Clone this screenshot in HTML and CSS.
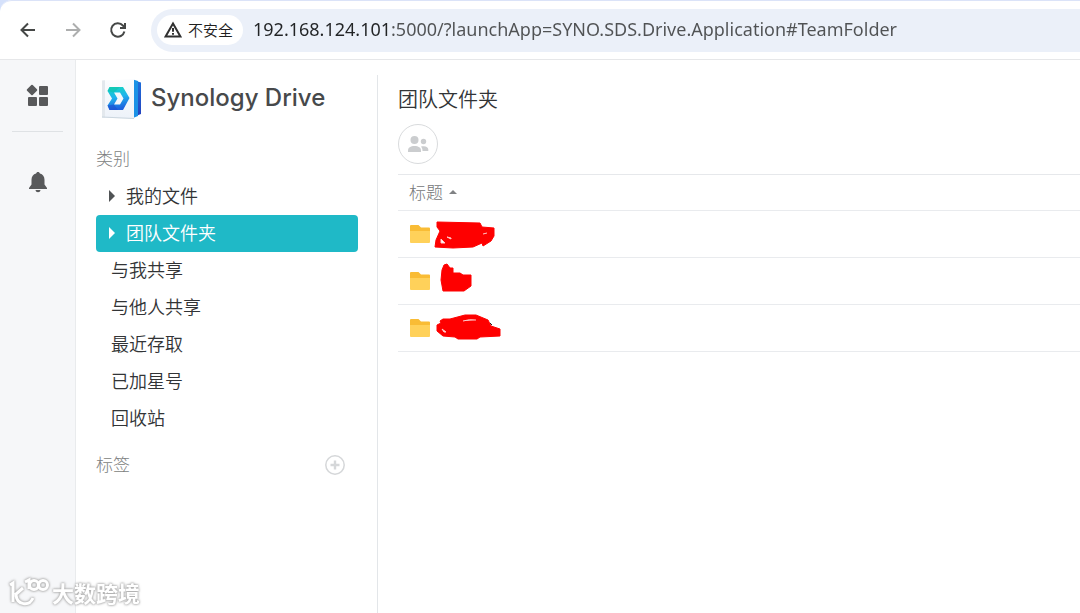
FILE: index.html
```html
<!DOCTYPE html>
<html lang="zh-CN">
<head>
  <meta charset="UTF-8">
  <title>Synology Drive</title>
  <meta name="viewport" content="width=device-width, initial-scale=1.0">
  <link rel="stylesheet" href="styles.css">
</head>
<body>
  <header class="browser-bar">
    <button class="nav-btn" type="button" aria-label="后退">
      <svg width="20" height="20" viewBox="0 0 20 20"><path d="M17 10H4M10 3.5L3.5 10L10 16.5"/></svg>
    </button>
    <button class="nav-btn" type="button" aria-label="前进" disabled>
      <svg width="20" height="20" viewBox="0 0 20 20"><path d="M3 10H16M10 3.5L16.5 10L10 16.5"/></svg>
    </button>
    <button class="nav-btn" type="button" aria-label="刷新">
      <svg width="20" height="20" viewBox="0 0 20 20"><path d="M16.4 11.5A6.7 6.7 0 1 1 14.9 5.5L16.5 7.2M17 3V8H12"/></svg>
    </button>
    <div class="address">
      <button class="security" type="button">
        <svg width="18" height="18" viewBox="0 0 18 18"><path d="M9 2.5L16.4 15.4H1.6Z"/><path d="M9 7V10.8M9 12V13.8"/></svg>
        不安全
      </button>
      <input class="url" type="text" aria-label="地址" value="192.168.124.101:5000/?launchApp=SYNO.SDS.Drive.Application#TeamFolder">
    </div>
  </header>

  <div class="app">
    <nav class="rail">
      <button type="button" aria-label="应用">
        <svg width="24" height="24" viewBox="0 0 24 24"><rect x="2" y="2" width="8" height="8" rx="1" transform="rotate(45 6 6)"/><rect x="13" y="2" width="9" height="9" rx="1"/><rect x="2" y="13" width="9" height="9" rx="1"/><rect x="13" y="13" width="9" height="9" rx="1"/></svg>
      </button>
      <hr>
      <button type="button" aria-label="通知">
        <svg width="24" height="24" viewBox="0 0 24 24"><path d="M12 1C13 1 13.7 1.600 13.9 2.5C16.8 3.3 18.5 5.5 18.5 8.7V13.5L21 17V18H3V17L5.500 13.500V8.700C5.500 5.500 7.200 3.300 10.100 2.500C10.300 1.600 11 1 12 1Z"/><path d="M9.500 19H14.500C14.300 20.500 13.300 21.200 12 21.200S9.700 20.500 9.500 19Z"/></svg>
      </button>
    </nav>

    <aside class="sidebar">
      <div class="brand">
        <svg width="42" height="42" viewBox="0 0 42 42">
          <defs>
            <linearGradient id="pages" x1="0" y1="0" x2="0" y2="1"><stop offset="0" stop-color="#1d6fdc"/><stop offset="1" stop-color="#2441bd"/></linearGradient>
            <linearGradient id="mark" x1="0" y1="0" x2="0.200" y2="1"><stop offset="0" stop-color="#13d9bd"/><stop offset="0.500" stop-color="#20b4ed"/><stop offset="1" stop-color="#1c62df"/></linearGradient>
            <linearGradient id="cover" x1="0" y1="0" x2="0" y2="1"><stop offset="0" stop-color="#fbfcfe"/><stop offset="1" stop-color="#edf2f9"/></linearGradient>
          </defs>
          <path d="M36 3L41 4.500V36L36 38Z" fill="url(#pages)"/>
          <path d="M33 1.500L38 3V38L33 40Z" fill="#1a91e6"/>
          <path d="M2 2.500L34 1V41L2 39.500Z" fill="url(#cover)"/>
          <path d="M2 2.500L5 2.300V39.600L2 39.500Z" fill="#e3e8ed"/>
          <path d="M2 39L34 40.500" stroke="#cbd6df" fill="none"/>
          <path d="M9.500 9H23L29.500 20L23 32H9.500L7.500 27.500L12 20.500L7.500 13ZM14 14.500L17.500 20.500L14 26.500H20L23.500 20.500L20 14.500Z" fill="url(#mark)" fill-rule="evenodd"/>
          <path d="M7.500 27.500L14 26.500L18 32H9.500Z" fill="#1b4fd0" opacity="0.600"/>
          <path d="M9.500 9H20L14 14.500L7.500 13Z" fill="#0cb9a0" opacity="0.400"/>
        </svg>
        <span>Synology Drive</span>
      </div>
      <h2>类别</h2>
      <ul class="menu">
        <li><a class="parent" href="#MyDrive">我的文件</a></li>
        <li><a class="parent active" href="#TeamFolder">团队文件夹</a></li>
        <li><a href="#SharedWithMe">与我共享</a></li>
        <li><a href="#SharedWithOthers">与他人共享</a></li>
        <li><a href="#Recent">最近存取</a></li>
        <li><a href="#Starred">已加星号</a></li>
        <li><a href="#RecycleBin">回收站</a></li>
      </ul>
      <div class="labels">
        <h2>标签</h2>
        <button type="button" aria-label="新增标签">
          <svg width="20" height="20" viewBox="0 0 20 20"><circle cx="10" cy="10" r="9.200"/><path d="M10 5.500V14.500M5.500 10H14.500" stroke-width="2.400"/></svg>
        </button>
      </div>
    </aside>

    <main class="content">
      <h1>团队文件夹</h1>
      <button class="share" type="button" aria-label="共享">
        <svg width="22" height="18" viewBox="0 0 22 18"><circle cx="7.500" cy="5" r="4"/><path d="M1 17V15.500C1 12.500 3.500 11 7.500 11S14 12.500 14 15.500V17Z"/><circle cx="16.500" cy="6.500" r="2.700"/><path d="M14 11.500C18.500 10.500 21.300 12 21.300 14.500V16H15.500C15.500 14 15 12.700 14 11.500Z"/></svg>
      </button>
      <table class="files">
        <thead>
          <tr><th scope="col">标题 <span class="sort"></span></th></tr>
        </thead>
        <tbody>
          <tr><td><div class="file">
            <svg class="folder" width="22" height="20" viewBox="0 0 22 20"><path d="M1 2Q1 1 2 1H9.500L12 3.500H20Q21 3.500 21 4.500V10H1Z" fill="#f9bc35"/><path d="M1 7H21V18Q21 19 20 19H2Q1 19 1 18Z" fill="#ffd15a"/></svg>
            <svg class="redact" width="70" height="46" viewBox="0 0 70 46"><path d="M3 11L46 12L48 16L60 17V25L57 30L49 35L48 32L39 36L19 37L1 36L2 29L6 20L3 16Z"/><path class="gap" d="M7 28L11 32H7ZM13 26L17 27V28ZM49 23L53 22"/></svg>
          </div></td></tr>
          <tr><td><div class="file">
            <svg class="folder" width="22" height="20" viewBox="0 0 22 20"><path d="M1 2Q1 1 2 1H9.500L12 3.500H20Q21 3.500 21 4.500V10H1Z" fill="#f9bc35"/><path d="M1 7H21V18Q21 19 20 19H2Q1 19 1 18Z" fill="#ffd15a"/></svg>
            <svg class="redact" width="70" height="46" viewBox="0 0 70 46"><path d="M8 12L10 7L13 6L16 10H19V15L26 15L29 17H37V28L30 33H9L7 22Z"/></svg>
          </div></td></tr>
          <tr><td><div class="file">
            <svg class="folder" width="22" height="20" viewBox="0 0 22 20"><path d="M1 2Q1 1 2 1H9.500L12 3.500H20Q21 3.500 21 4.500V10H1Z" fill="#f9bc35"/><path d="M1 7H21V18Q21 19 20 19H2Q1 19 1 18Z" fill="#ffd15a"/></svg>
            <svg class="redact" width="70" height="46" viewBox="0 0 70 46"><path d="M6 16L9 14H16L31 10H42L54 15L57 21L66 24V31L46 32L43 34H24L21 32L9 31L3 26V20L7 18Z"/><path class="gap" d="M8 24L12 27H10ZM29 16Q35 14 42 15"/><path class="stray" d="M56 18L58 20"/></svg>
          </div></td></tr>
        </tbody>
      </table>
    </main>
  </div>

  <div class="watermark">
    <svg width="40" height="32" viewBox="0 0 40 32"><path d="M1 8L4 6V25M14 11L6 18M7 18C8 28 20 30 24 21"/><path d="M16 5L20 3V12"/><circle cx="25" cy="8" r="4.500"/><circle cx="34" cy="8" r="4.500"/></svg>
    <span>大数跨境</span>
  </div>
</body>
</html>
```

FILE: styles.css
```css
* { box-sizing: border-box; }
body { margin: 0; min-height: 100vh; display: flex; flex-direction: column; background: #fff; color: #323436; font-family: "Noto Sans", "Noto Sans CJK SC", sans-serif; font-size: 18px; font-weight: 300; }
button { padding: 0; border: 0; background: none; font: inherit; color: inherit; cursor: pointer; }
h1, h2 { margin: 0; font-weight: inherit; }
svg { display: block; flex: none; }

/* browser toolbar */
.browser-bar { display: flex; align-items: center; height: 60px; padding-left: 18px; gap: 25px; border-top: 1px solid #dbe3f8; border-bottom: 1px solid #e6e7e9; border-top-left-radius: 12px; box-shadow: -6px -6px 0 #d5e1fb; }
.nav-btn svg { fill: none; stroke: #454746; stroke-width: 2; }
.nav-btn:disabled svg { stroke: #adaeae; }
.address { flex: 1; display: flex; align-items: center; gap: 10px; height: 43px; margin-left: -2px; padding-left: 6px; border-radius: 22px 0 0 22px; background: #ebf0f9; }
.security { display: flex; align-items: center; gap: 6px; height: 30px; padding: 0 10px 0 7px; border-radius: 15px; background: #fff; font-size: 15px; line-height: 20px; color: #1f1f1f; }
.security svg { fill: none; stroke: #303030; stroke-width: 2; }
.url { flex: 1; min-width: 0; height: 32px; padding: 0 0 2px; border: 0; outline: 0; font-family: "Noto Sans", sans-serif; font-size: 18px; font-weight: 400; color: transparent; background: linear-gradient(to right, #222426 137px, #505254 137px); background-clip: text; -webkit-background-clip: text; }

.app { flex: 1; display: flex; }

/* left icon rail */
.rail { flex: none; width: 76px; display: flex; flex-direction: column; align-items: center; padding-top: 24px; background: #f6f7f9; border-right: 1px solid #e9ebed; }
.rail svg { fill: #58595b; }
.rail hr { width: 51px; margin: 23px 0 39px; border: 0; border-top: 1px solid #dfe2e5; }

/* category sidebar */
.sidebar { flex: none; width: 302px; margin-top: 15px; padding: 3px 19px 0 20px; border-right: 1px solid #e3e6e9; }
.brand { display: flex; align-items: center; gap: 9px; height: 42px; padding-left: 4px; font-family: Inter, sans-serif; font-size: 24px; font-weight: 500; color: #47494b; }
.brand span { padding-bottom: 4px; }
.sidebar h2 { font-size: 17px; line-height: 24px; color: #7c7e80; }
.brand + h2 { margin-top: 27px; }
.menu { list-style: none; margin: 7px 0 16px; padding: 0; }
.menu a { display: flex; align-items: center; gap: 11px; height: 37px; padding: 0 0 4px 15px; border-radius: 4px; color: inherit; text-decoration: none; }
.menu .parent { padding-left: 13px; }
.parent::before { content: ""; margin-top: 2px; border: solid transparent; border-width: 6px 0 6px 6px; border-left-color: #505355; }
.menu .active { background: #1fb9c7; color: #fff; }
.active::before { border-left-color: #fff; }
.labels { display: flex; align-items: center; justify-content: space-between; padding-right: 13px; }
.labels svg { fill: none; stroke: #d5d7d9; stroke-width: 1.5; }

/* file list */
.content { flex: 1; min-width: 0; padding: 25px 0 0 20px; }
h1 { font-size: 20px; line-height: 30px; }
.menu, h1, .security { font-weight: 350; }
.share { display: grid; place-items: center; width: 40px; height: 40px; margin: 9px 0 10px; border: 1px solid #d9dbdd; border-radius: 50%; }
.share svg { fill: #cbcdcf; }
.files { width: 100%; border-collapse: separate; border-spacing: 0; border-top: 1px solid #e6e8eb; }
.files th { height: 36px; padding: 0 11px; border-bottom: 1px solid #e9ebee; text-align: left; font-size: 17px; font-weight: inherit; line-height: 24px; color: #747678; }
.sort { display: inline-block; margin-left: 2px; border: solid transparent; border-width: 0 4px 4px; border-bottom-color: #808284; vertical-align: 5px; }
.files td { height: 47px; padding: 0 11px; border-bottom: 1px solid #e9ebee; }
.file { display: flex; align-items: center; gap: 3px; }
.redact { fill: #fe0000; stroke: #fe0000; stroke-width: 1; stroke-linejoin: round; }
.redact .gap { fill: #fff; stroke: #ffc9c9; }
.redact .stray { stroke: #222; }

.watermark { position: fixed; left: 9px; bottom: 4px; display: flex; align-items: center; gap: 3px; color: #fff; font-size: 22px; font-weight: 700; line-height: 32px; filter: drop-shadow(0 0 1px #aaa) drop-shadow(0 0 1px #bbb); }
.watermark svg { fill: none; stroke: #fff; stroke-width: 3; }
```
